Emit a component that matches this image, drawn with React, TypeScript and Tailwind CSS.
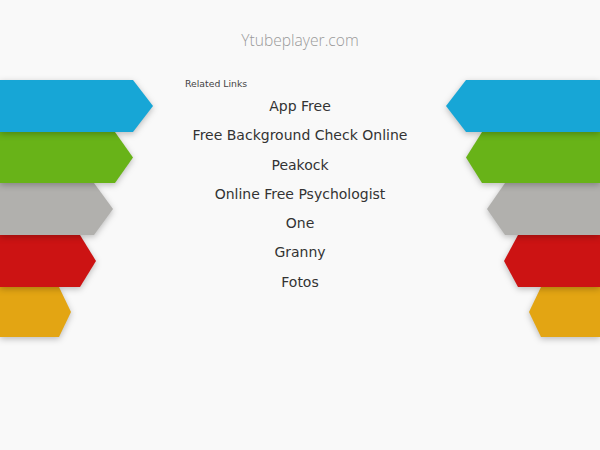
const leftArrows = [
  { cls: "relative z-50 h-[52px] w-[153px] bg-[#17a6d6] [clip-path:polygon(0_0,133px_0,100%_50%,133px_100%,0_100%)]" },
  { cls: "relative z-40 h-[51px] w-[133px] bg-[#68b318] [clip-path:polygon(0_0,115px_0,100%_50%,115px_100%,0_100%)]" },
  { cls: "relative z-30 h-[52px] w-[113px] bg-[#b1b0ad] [clip-path:polygon(0_0,94px_0,100%_50%,94px_100%,0_100%)]" },
  { cls: "relative z-20 h-[52px] w-[96px] bg-[#cc1313] [clip-path:polygon(0_0,80px_0,100%_50%,80px_100%,0_100%)]" },
  { cls: "relative z-10 h-[50px] w-[71px] bg-[#e3a513] [clip-path:polygon(0_0,59px_0,100%_50%,59px_100%,0_100%)]" },
]

const rightArrows = [
  { cls: "relative z-50 h-[52px] w-[154px] bg-[#17a6d6] [clip-path:polygon(20px_0,100%_0,100%_100%,20px_100%,0_50%)]" },
  { cls: "relative z-40 h-[51px] w-[134px] bg-[#68b318] [clip-path:polygon(16px_0,100%_0,100%_100%,16px_100%,0_50%)]" },
  { cls: "relative z-30 h-[52px] w-[113px] bg-[#b1b0ad] [clip-path:polygon(18px_0,100%_0,100%_100%,18px_100%,0_50%)]" },
  { cls: "relative z-20 h-[52px] w-[96px] bg-[#cc1313] [clip-path:polygon(14px_0,100%_0,100%_100%,14px_100%,0_50%)]" },
  { cls: "relative z-10 h-[50px] w-[71px] bg-[#e3a513] [clip-path:polygon(12px_0,100%_0,100%_100%,12px_100%,0_50%)]" },
]

const links = [
  "App Free",
  "Free Background Check Online",
  "Peakock",
  "Online Free Psychologist",
  "One",
  "Granny",
  "Fotos",
]

export default function App() {
  return (
    <div className="h-[450px] w-[600px] overflow-hidden bg-[#f9f9f9] font-['DejaVu_Sans',sans-serif]">
      <div className="pt-[30px] text-center font-['Open_Sans',sans-serif] text-[15.6px] font-light leading-[20px] text-[#999]">
        Ytubeplayer.com
      </div>

      <div className="mt-[24px] flex">
        <div className="flex w-[160px] flex-col items-start pt-[6px]">
          {leftArrows.map((a, i) => (
            <div key={i} className="relative drop-shadow-[0_2px_3px_rgba(0,0,0,0.25)]" style={{ zIndex: 10 - i }}>
              <div className={a.cls} />
            </div>
          ))}
        </div>

        <div className="w-[280px] pt-[3px]">
          <div className="pl-[25px] text-[9.3px] leading-[13px] text-[#444]">Related Links</div>
          <div className="pt-[2px]">
            {links.map((l) => (
              <div key={l} className="text-center text-[14px] leading-[29.3px] text-[#333]">
                {l}
              </div>
            ))}
          </div>
        </div>

        <div className="flex w-[160px] flex-col items-end pt-[6px]">
          {rightArrows.map((a, i) => (
            <div key={i} className="relative drop-shadow-[0_2px_3px_rgba(0,0,0,0.25)]" style={{ zIndex: 10 - i }}>
              <div className={a.cls} />
            </div>
          ))}
        </div>
      </div>
    </div>
  )
}
